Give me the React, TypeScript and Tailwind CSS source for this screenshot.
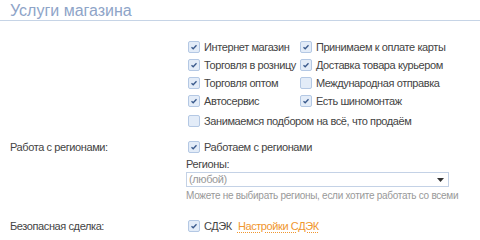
import React from 'react';

const Box = ({ checked }: { checked: boolean }) => (
  <span className="inline-flex w-[12px] h-[12px] shrink-0 items-center justify-center rounded-[2px] border border-[#b4c8e4] bg-[#e3ecf8]">
    {checked && (
      <svg width="8" height="8" viewBox="0 0 8 8">
        <path d="M1.5 4.2 L3.2 5.8 L6.5 2.2" fill="none" stroke="#3a5a8c" strokeWidth="1.3" />
      </svg>
    )}
  </span>
);

const Check = ({ checked, label }: { checked: boolean; label: string }) => (
  <label className="flex items-center gap-[4px] h-[18px] whitespace-nowrap">
    <Box checked={checked} />
    <span>{label}</span>
  </label>
);

const services = [
  ['Интернет магазин', true],
  ['Принимаем к оплате карты', true],
  ['Торговля в розницу', true],
  ['Доставка товара курьером', true],
  ['Торговля оптом', true],
  ['Международная отправка', false],
  ['Автосервис', true],
  ['Есть шиномонтаж', true],
] as const;

export default function App() {
  return (
    <div className="w-[480px] h-[240px] bg-white text-[11px] tracking-[-0.4px] text-[#444] overflow-hidden" style={{ fontFamily: '"Liberation Sans", Arial, sans-serif' }}>
      <div className="border-b border-[#c6d4e6] pl-[10px] pt-[1px] h-[21px] text-[16px] leading-[19px] tracking-normal text-[#8ea4c8]">
        Услуги магазина
      </div>

      <div className="flex mt-[17px]">
        <div className="w-[188px] shrink-0" />
        <div>
          <div className="grid grid-cols-[auto_auto] gap-x-[4px]">
            {services.map(([label, checked]) => (
              <Check key={label} label={label} checked={checked} />
            ))}
          </div>
          <div className="mt-[2px]">
            <Check label="Занимаемся подбором на всё, что продаём" checked={false} />
          </div>
        </div>
      </div>

      <div className="flex mt-[8px]">
        <div className="w-[188px] shrink-0 pl-[10px] h-[18px] leading-[18px]">Работа с регионами:</div>
        <div className="w-[261px]">
          <Check label="Работаем с регионами" checked={true} />
          <div className="ml-[-2px] mt-[1px] leading-[14px]">Регионы:</div>
          <div className="ml-[-2px] mt-[1px] h-[15px] border border-[#c4d2e6] flex items-center justify-between pl-[2px] pr-[4px] text-[#999]">
            <span className="leading-[13px]">(любой)</span>
            <svg width="7" height="4" viewBox="0 0 7 4"><path d="M0 0 H7 L3.5 4 Z" fill="#333" /></svg>
          </div>
          <div className="ml-[-2px] mt-[3px] text-[10px] tracking-[-0.28px] text-[#999] leading-[12px] whitespace-nowrap">Можете не выбирать регионы, если хотите работать со всеми</div>
        </div>
      </div>

      <div className="flex mt-[15px]">
        <div className="w-[188px] shrink-0 pl-[10px] h-[18px] leading-[18px]">Безопасная сделка:</div>
        <div className="flex items-center gap-[4px] h-[18px]">
          <Box checked={true} />
          <span>СДЭК</span>
          <a className="ml-[2px] text-[#f0962e] underline decoration-dotted underline-offset-2">Настройки СДЭК</a>
        </div>
      </div>
    </div>
  );
}
